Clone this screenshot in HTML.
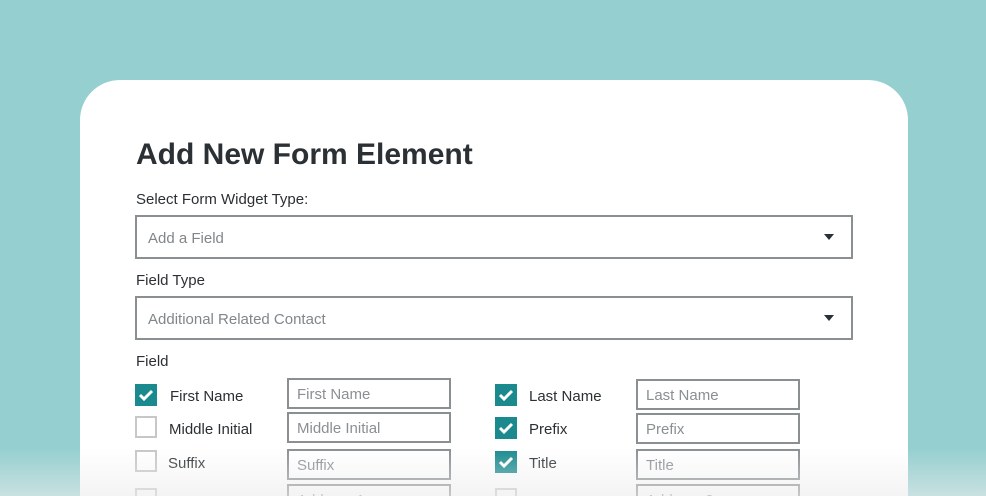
<!DOCTYPE html>
<html><head><style>
*{box-sizing:border-box;margin:0;padding:0}
html{width:986px;height:496px;overflow:hidden}
body{width:986px;height:496px;overflow:hidden;background:#95cfd0;font-family:"Liberation Sans",sans-serif;position:relative}
.card{position:absolute;left:80px;top:80px;width:828px;height:416px;background:#fff;border-radius:40px 40px 0 0}
.fade{position:absolute;left:0;top:448px;width:986px;height:48px;background:linear-gradient(to bottom,rgba(236,236,236,0),rgba(236,236,236,0.6))}
h1{position:absolute;left:136px;top:138px;font-size:30px;font-weight:bold;color:#2b3034}
.lbl{position:absolute;font-size:15px;color:#2b3034}
.sel{position:absolute;left:135px;width:718px;height:44px;border:2px solid #8a8f92;font-size:15px;color:#80868a;padding:13px 11px}
.sel:after{content:"";position:absolute;right:17px;top:17px;border-left:5px solid transparent;border-right:5px solid transparent;border-top:6px solid #2b3034}
.cb{position:absolute;width:22px;height:22px;border:2px solid #c5c8c9;background:#fff}
.cb.on{background:#1a8a8f;border-color:#1a8a8f}
.cb.on svg{position:absolute;left:0;top:0}
.inp{position:absolute;width:164px;height:31px;border:2px solid #8a8f92;font-size:15px;color:#8a8f92;padding:6px 8px}
</style></head><body>
<div class="card"></div>
<h1>Add New Form Element</h1>
<div class="lbl" style="left:136px;top:191px">Select Form Widget Type:</div>
<div class="sel" style="top:215px">Add a Field</div>
<div class="lbl" style="left:136px;top:272px">Field Type</div>
<div class="sel" style="top:296px">Additional Related Contact</div>
<div class="lbl" style="left:136px;top:353px">Field</div>

<div class="cb on" style="left:135px;top:384px"><svg width="18" height="18" viewBox="0 0 18 18"><path d="M3 9l4 4 8-8" stroke="#fff" stroke-width="3" fill="none"/></svg></div>
<div class="lbl" style="left:170px;top:388px">First Name</div>
<div class="inp" style="left:287px;top:378px">First Name</div>
<div class="cb" style="left:135px;top:416px"></div>
<div class="lbl" style="left:169px;top:421px">Middle Initial</div>
<div class="inp" style="left:287px;top:412px">Middle Initial</div>
<div class="cb" style="left:135px;top:450px"></div>
<div class="lbl" style="left:168px;top:455px">Suffix</div>
<div class="inp" style="left:287px;top:449px">Suffix</div>
<div class="cb" style="left:135px;top:488px"></div>
<div class="inp" style="left:287px;top:484px">Address 1</div>

<div class="cb on" style="left:495px;top:384px"><svg width="18" height="18" viewBox="0 0 18 18"><path d="M3 9l4 4 8-8" stroke="#fff" stroke-width="3" fill="none"/></svg></div>
<div class="lbl" style="left:529px;top:388px">Last Name</div>
<div class="inp" style="left:636px;top:379px">Last Name</div>
<div class="cb on" style="left:495px;top:417px"><svg width="18" height="18" viewBox="0 0 18 18"><path d="M3 9l4 4 8-8" stroke="#fff" stroke-width="3" fill="none"/></svg></div>
<div class="lbl" style="left:529px;top:421px">Prefix</div>
<div class="inp" style="left:636px;top:413px">Prefix</div>
<div class="cb on" style="left:495px;top:451px"><svg width="18" height="18" viewBox="0 0 18 18"><path d="M3 9l4 4 8-8" stroke="#fff" stroke-width="3" fill="none"/></svg></div>
<div class="lbl" style="left:529px;top:455px">Title</div>
<div class="inp" style="left:636px;top:449px">Title</div>
<div class="cb" style="left:495px;top:488px"></div>
<div class="inp" style="left:636px;top:484px">Address 2</div>
<div class="fade"></div>
</body></html>
